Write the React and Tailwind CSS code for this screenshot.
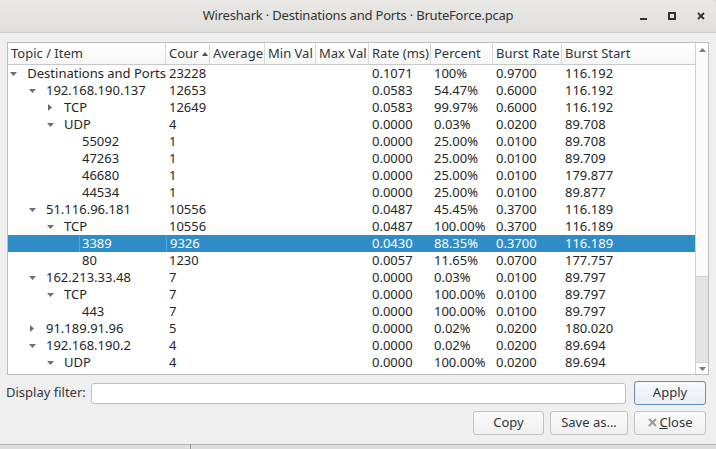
import React from "react";

const columns = [
  { label: "Topic / Item", w: "w-[158px]" },
  { label: "Cour", w: "w-[44px]", sort: true },
  { label: "Average", w: "w-[55px]" },
  { label: "Min Val", w: "w-[51px]" },
  { label: "Max Val", w: "w-[53px]" },
  { label: "Rate (ms)", w: "w-[62px]" },
  { label: "Percent", w: "w-[62px]" },
  { label: "Burst Rate", w: "w-[69px]" },
  { label: "Burst Start", w: "flex-1" },
];

const rows = [
  [0, "down", "Destinations and Ports", "23228", "0.1071", "100%", "0.9700", "116.192"],
  [1, "down", "192.168.190.137", "12653", "0.0583", "54.47%", "0.6000", "116.192"],
  [2, "right", "TCP", "12649", "0.0583", "99.97%", "0.6000", "116.192"],
  [2, "down", "UDP", "4", "0.0000", "0.03%", "0.0200", "89.708"],
  [3, null, "55092", "1", "0.0000", "25.00%", "0.0100", "89.708"],
  [3, null, "47263", "1", "0.0000", "25.00%", "0.0100", "89.709"],
  [3, null, "46680", "1", "0.0000", "25.00%", "0.0100", "179.877"],
  [3, null, "44534", "1", "0.0000", "25.00%", "0.0100", "89.877"],
  [1, "down", "51.116.96.181", "10556", "0.0487", "45.45%", "0.3700", "116.189"],
  [2, "down", "TCP", "10556", "0.0487", "100.00%", "0.3700", "116.189"],
  [3, null, "3389", "9326", "0.0430", "88.35%", "0.3700", "116.189", true],
  [3, null, "80", "1230", "0.0057", "11.65%", "0.0700", "177.757"],
  [1, "down", "162.213.33.48", "7", "0.0000", "0.03%", "0.0100", "89.797"],
  [2, "down", "TCP", "7", "0.0000", "100.00%", "0.0100", "89.797"],
  [3, null, "443", "7", "0.0000", "100.00%", "0.0100", "89.797"],
  [1, "right", "91.189.91.96", "5", "0.0000", "0.02%", "0.0200", "180.020"],
  [1, "down", "192.168.190.2", "4", "0.0000", "0.02%", "0.0200", "89.694"],
  [2, "down", "UDP", "4", "0.0000", "100.00%", "0.0200", "89.694"],
];

const indent = ["pl-[1px]", "pl-[19px]", "pl-[37px]", "pl-[55px]"];

const Arrow = ({ dir, light }) => {
  const fill = light ? "#ffffff" : "#6b6e70";
  if (dir === "down")
    return (
      <svg width="7" height="4" viewBox="0 0 7 4">
        <path d="M0 0h7L3.5 4z" fill={fill} />
      </svg>
    );
  if (dir === "right")
    return (
      <svg width="4" height="7" viewBox="0 0 4 7">
        <path d="M0 0v7l4-3.5z" fill={fill} />
      </svg>
    );
  return null;
};

const Button = ({ children, w, primary }) => (
  <button
    className={`h-[24px] ${w} rounded-[3px] border text-[13px] text-[#31363b] ${
      primary
        ? "border-[#5d8fc0] bg-gradient-to-b from-[#f7f9fb] to-[#e9eef3]"
        : "border-[#c2c2c2] bg-gradient-to-b from-[#fbfbfb] to-[#f0f0f0]"
    }`}
  >
    {children}
  </button>
);

export default function App() {
  return (
    <div className="w-[716px] h-[449px] overflow-hidden bg-[#dcdcdc] font-['Noto_Sans',sans-serif] text-[13px] text-[#232627]">
      <div className="h-[444px] rounded-tr-[7px] bg-[#efefef] flex flex-col">
        {/* title bar */}
        <div className="h-[33px] shrink-0 relative flex items-center justify-center rounded-tr-[7px] bg-gradient-to-b from-[#e9e8e6] to-[#e0dfdc] border-b border-[#cfcdca]">
          <span className="text-[13px] text-[#2e3436] tracking-[-0.2px]">
            Wireshark · Destinations and Ports · BruteForce.pcap
          </span>
          <div className="absolute right-[11px] top-0 h-full flex items-center gap-[21px]">
            <div className="w-[7px] h-[8px] flex items-end">
              <div className="w-[7px] h-[2px] bg-[#2e3436]" />
            </div>
            <div className="w-[8px] h-[8px] border-2 border-[#2e3436]" />
            <svg width="8" height="8" viewBox="0 0 8 8">
              <path d="M1 1l6 6M7 1L1 7" stroke="#2e3436" strokeWidth="1.8" />
            </svg>
          </div>
        </div>

        {/* table */}
        <div className="mx-[7px] mt-[9px] h-[333px] shrink-0 flex border border-[#bcbcbc] bg-white">
          <div className="flex-1 flex flex-col">
            <div className="h-[22px] flex border-b border-[#c9c9c9] bg-gradient-to-b from-[#ffffff] to-[#f6f6f6] text-[#31363b]">
              {columns.map((c, i) => (
                <div
                  key={i}
                  className={`${c.w} shrink-0 flex items-center pl-[3px] whitespace-nowrap overflow-hidden ${
                    i < columns.length - 1 ? "border-r border-[#d6d6d6]" : ""
                  }`}
                >
                  {c.label}
                  {c.sort && (
                    <svg className="ml-[4px]" width="6" height="4" viewBox="0 0 6 4">
                      <path d="M0 4h6L3 0z" fill="#4d4d4d" />
                    </svg>
                  )}
                </div>
              ))}
            </div>
            {rows.map((r, i) => {
              const [lvl, dir, name, count, rate, pct, br, bs, sel] = r;
              const cells = [count, "", "", "", rate, pct, br, bs];
              return (
                <div
                  key={i}
                  className={`h-[17px] flex items-center leading-[17px] whitespace-nowrap ${
                    sel ? "bg-[#308cc6] text-white" : ""
                  }`}
                >
                  <div className={`w-[158px] shrink-0 flex items-center ${indent[lvl]}`}>
                    <div className="w-[10px] h-[17px] flex items-center justify-center">
                      <Arrow dir={dir} light={sel} />
                    </div>
                    <span
                      className={
                        sel ? "ml-[6px] pl-[2px] border-l border-[#5aa5d6]" : "ml-[9px]"
                      }
                    >
                      {name}
                    </span>
                  </div>
                  {cells.map((v, j) => (
                    <div
                      key={j}
                      className={`${columns[j + 1].w} shrink-0 pl-[3px] ${
                        sel && j === 0 ? "border-l border-[#5aa5d6]" : ""
                      }`}
                    >
                      {v}
                    </div>
                  ))}
                </div>
              );
            })}
          </div>
          {/* scrollbar */}
          <div className="w-[13px] shrink-0 flex flex-col border-l border-[#d0d0d0]">
            <div className="h-[13px] flex items-center justify-center bg-white">
              <svg width="7" height="4" viewBox="0 0 7 4">
                <path d="M0 4h7L3.5 0z" fill="#7a7a7a" />
              </svg>
            </div>
            <div className="h-[221px] bg-[#fafafa] border-b border-[#d2d2d2]" />
            <div className="flex-1 bg-[#e3e3e3]" />
            <div className="h-[12px] flex items-center justify-center bg-white border-t border-[#d2d2d2]">
              <svg width="7" height="4" viewBox="0 0 7 4">
                <path d="M0 0h7L3.5 4z" fill="#7a7a7a" />
              </svg>
            </div>
          </div>
        </div>

        {/* filter */}
        <div className="mt-[6px] h-[24px] flex items-center pl-[6px] pr-[10px]">
          <span className="w-[85px] shrink-0 text-[#31363b]">Display filter:</span>
          <div className="w-[535px] h-[21px] rounded-[3px] border border-[#c2c2c2] bg-white" />
          <div className="ml-[8px]">
            <Button w="w-[72px]" primary>
              Apply
            </Button>
          </div>
        </div>

        {/* buttons */}
        <div className="mt-[6px] flex justify-end gap-[6px] pr-[10px]">
          <Button w="w-[71px]">Copy</Button>
          <Button w="w-[78px]">Save as...</Button>
          <Button w="w-[72px]">
            <span className="inline-flex items-center gap-[3px]">
              <svg width="9" height="9" viewBox="0 0 9 9">
                <path d="M1 1l7 7M8 1L1 8" stroke="#9a9a9a" strokeWidth="2" />
              </svg>
              <span>
                <span className="underline">C</span>lose
              </span>
            </span>
          </Button>
        </div>
      </div>
      <div className="h-[5px] flex">
        <div className="w-[190px] border-t border-[#b5b5b5]" />
        <div className="w-[1px] bg-[#9a9a9a]" />
        <div className="flex-1 border-t border-[#b5b5b5]" />
      </div>
    </div>
  );
}
